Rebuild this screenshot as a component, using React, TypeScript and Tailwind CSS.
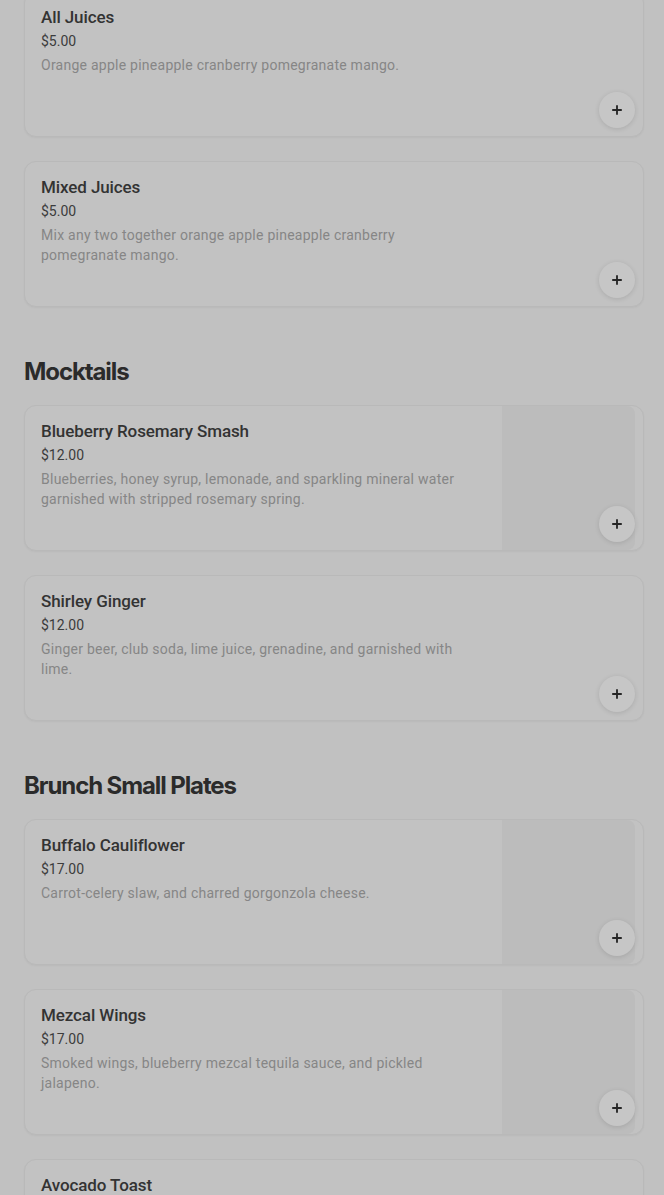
import { Plus } from 'lucide-react';

interface MenuItem {
  name: string;
  price: string;
  description: string;
  image?: boolean;
}

interface Section {
  title?: string;
  items: MenuItem[];
}

const sections: Section[] = [
  {
    items: [
      { name: 'All Juices', price: '$5.00', description: 'Orange apple pineapple cranberry pomegranate mango.' },
      { name: 'Mixed Juices', price: '$5.00', description: 'Mix any two together orange apple pineapple cranberry pomegranate mango.' },
    ],
  },
  {
    title: 'Mocktails',
    items: [
      {
        name: 'Blueberry Rosemary Smash',
        price: '$12.00',
        description: 'Blueberries, honey syrup, lemonade, and sparkling mineral water garnished with stripped rosemary spring.',
        image: true,
      },
      { name: 'Shirley Ginger', price: '$12.00', description: 'Ginger beer, club soda, lime juice, grenadine, and garnished with lime.' },
    ],
  },
  {
    title: 'Brunch Small Plates',
    items: [
      { name: 'Buffalo Cauliflower', price: '$17.00', description: 'Carrot-celery slaw, and charred gorgonzola cheese.', image: true },
      { name: 'Mezcal Wings', price: '$17.00', description: 'Smoked wings, blueberry mezcal tequila sauce, and pickled jalapeno.', image: true },
      { name: 'Avocado Toast', price: '$14.00', description: 'Smashed avocado on toasted sourdough.' },
    ],
  },
];

function ItemCard({ item }: { item: MenuItem }) {
  return (
    <div className="relative flex h-[146px] overflow-hidden rounded-xl border border-[#b9b9b9] bg-[#c2c2c2] shadow-[0_1px_2px_rgba(0,0,0,0.04)]">
      <div className="flex-1 min-w-0 pl-4 pt-[15px] pr-4">
        <div className="max-w-[420px]">
          <h3 className="text-[17px] leading-5 font-medium tracking-[-0.1px] text-[#333333]">{item.name}</h3>
          <p className="mt-1 text-sm leading-5 text-[#3c3c3c]">{item.price}</p>
          <p className="mt-1 text-sm leading-5 tracking-[0.25px] text-[#868686]">{item.description}</p>
        </div>
      </div>
      {item.image && <div className="mr-2 w-[133px] shrink-0 rounded-r-lg bg-[#bcbcbc]" />}
      <button className="absolute bottom-2 right-2 flex h-9 w-9 items-center justify-center rounded-full bg-[#c6c6c6] shadow-[0_1px_5px_rgba(0,0,0,0.12)]">
        <Plus size={14} strokeWidth={3.2} className="text-[#262626]" />
      </button>
    </div>
  );
}

export default function App() {
  return (
    <div className="min-h-screen overflow-hidden bg-[#c1c1c1] pl-6 pr-5 font-['Roboto','Liberation_Sans',sans-serif]">
      <div className="-mt-[9px]">
        {sections.map((section, i) => (
          <section key={i} className={i > 0 ? 'mt-12' : ''}>
            {section.title && (
              <h2 className="mb-4 font-['Inter',sans-serif] text-2xl leading-[34px] font-bold tracking-[-1.1px] text-[#2b2b2b]">
                {section.title}
              </h2>
            )}
            <div className="flex flex-col gap-6">
              {section.items.map((item) => (
                <ItemCard key={item.name} item={item} />
              ))}
            </div>
          </section>
        ))}
      </div>
    </div>
  );
}
